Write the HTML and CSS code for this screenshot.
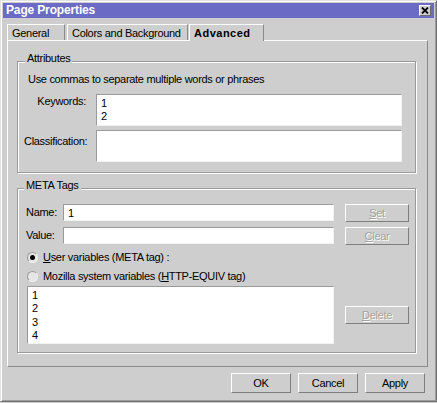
FILE: index.html
```html
<!DOCTYPE html>
<html>
<head>
<meta charset="utf-8">
<title>Page Properties</title>
<link rel="stylesheet" href="styles.css">
</head>
<body>
<div class="window">
  <div class="titlebar">
    <span class="title">Page Properties</span>
    <span class="close"><svg width="8" height="7" viewBox="0 0 8 7"><path d="M1 0.5 L7 6.5 M7 0.5 L1 6.5" stroke="#000" stroke-width="1.8"/></svg></span>
  </div>
  <div class="tabs">
    <div class="tab tab-general">General</div>
    <div class="tab tab-colors">Colors and Background</div>
    <div class="tab tab-advanced">Advanced</div>
  </div>
  <div class="panel">
    <fieldset class="group group-attrs">
      <legend class="legend">Attributes</legend>
      <div class="hint">Use commas to separate multiple words or phrases</div>
      <div class="field-row">
        <label class="field-label label-keywords">Keywords:</label>
        <textarea class="textbox textarea">1
2</textarea>
      </div>
      <div class="field-row">
        <label class="field-label label-classification">Classification:</label>
        <textarea class="textbox textarea"></textarea>
      </div>
    </fieldset>
    <fieldset class="group group-meta">
      <legend class="legend">META Tags</legend>
      <div class="meta-row">
        <label class="meta-label">Name:</label>
        <input class="textbox input" type="text" value="1">
        <button class="btn btn-side" disabled><u>S</u>et</button>
      </div>
      <div class="meta-row">
        <label class="meta-label">Value:</label>
        <input class="textbox input" type="text" value="">
        <button class="btn btn-side" disabled><u>C</u>lear</button>
      </div>
      <div class="radio-group">
        <div class="radio-row"><span class="radio is-checked"></span><span><u>U</u>ser variables (META tag) :</span></div>
        <div class="radio-row"><span class="radio"></span><span>Mozilla system variables (<u>H</u>TTP-EQUIV tag)</span></div>
      </div>
      <div class="list-row">
        <div class="listbox">
          <div>1</div>
          <div>2</div>
          <div>3</div>
          <div>4</div>
        </div>
        <button class="btn btn-side" disabled><u>D</u>elete</button>
      </div>
    </fieldset>
  </div>
  <div class="actions">
    <button class="btn btn-action">OK</button>
    <button class="btn btn-action">Cancel</button>
    <button class="btn btn-action">Apply</button>
  </div>
</div>
</body>
</html>
```
FILE: styles.css
```css
* { box-sizing: border-box; }
html, body { margin: 0; padding: 0; }
body {
  width: 437px;
  height: 403px;
  background: #cecece;
  font-family: "Liberation Sans", Arial, sans-serif;
  font-size: 11px;
  line-height: 13px;
  letter-spacing: -0.3px;
  color: #000;
  overflow: hidden;
}
.window {
  width: 437px;
  height: 402px;
  padding: 2px;
  border: 1px solid;
  border-color: #e2e2e2 #707070 #707070 #e2e2e2;
  box-shadow: inset 1px 1px #fff, inset -1px -1px #9c9c9c;
  background: #cecece;
  display: flex;
  flex-direction: column;
}
.titlebar {
  height: 15px;
  background: #6b6bc5;
  display: flex;
  align-items: flex-start;
  justify-content: space-between;
  padding: 0 3px 0 3px;
}
.title {
  color: #fff;
  font-weight: bold;
  font-size: 12px;
  line-height: 15px;
  letter-spacing: -0.15px;
}
.close {
  margin-top: 2px;
  width: 12px;
  height: 11px;
  background: #cecece;
  border: 1px solid;
  border-color: #fff #6a6a6a #6a6a6a #fff;
  display: flex;
  align-items: center;
  justify-content: center;
}
.close svg { display: block; }
.tabs {
  display: flex;
  align-items: flex-end;
  margin-top: 6px;
  margin-left: 4px;
  height: 16px;
  position: relative;
  z-index: 1;
}
.tab {
  height: 16px;
  padding: 2px 0 0 4px;
  border: 1px solid;
  border-bottom: none;
  border-color: #fff #8a8a8a transparent #fff;
  white-space: nowrap;
  background: #cecece;
}
.tab-general { width: 58px; }
.tab-colors { width: 121px; margin-left: 2px; }
.tab-advanced {
  width: 75px;
  margin-left: 1px;
  height: 17px;
  margin-bottom: -1px;
  font-weight: bold;
  letter-spacing: 0.5px;
}
.panel {
  margin-left: 4px;
  width: 421px;
  border: 1px solid;
  border-color: #fff #8a8a8a #8a8a8a #fff;
  padding: 11px 11px 13px 9px;
}
.group {
  margin: 0;
  min-width: 0;
  border: 1px solid #9a9a9a;
  box-shadow: inset 1px 1px #fff, 1px 1px #fff;
}
.group-attrs { padding: 2px 13px 10px 6px; }
.group-meta { margin-top: 6px; padding: 6px 6px 8px 8px; }
.legend {
  padding: 0 2px 6px;
  line-height: 13px;
  background: #cecece;
}
.group-attrs .legend { margin-left: 1px; }
.group-meta .legend { margin-left: -2px; }
.hint { margin-left: 4px; white-space: nowrap; }
.field-row { display: flex; margin-top: 8px; }
.field-row + .field-row { margin-top: 4px; }
.field-label {
  width: 62px;
  margin-right: 10px;
  text-align: right;
  white-space: nowrap;
}
.label-keywords { padding-top: 1px; }
.label-classification { padding-top: 5px; }
.textbox {
  font: inherit;
  letter-spacing: inherit;
  color: #000;
  background: #fff;
  border: 1px solid;
  border-color: #9a9a9a #f2f2f2 #f2f2f2 #9a9a9a;
  margin: 0;
  outline: none;
  resize: none;
  overflow: hidden;
}
.textarea {
  width: 306px;
  height: 32px;
  padding: 2px 4px 0;
  line-height: 13.33px;
}
.input {
  width: 271px;
  height: 17px;
  padding: 1px 4px;
  line-height: 13px;
}
.meta-row { display: flex; align-items: flex-start; }
.meta-row + .meta-row { margin-top: 5px; }
.meta-label { width: 37px; padding-top: 2px; white-space: nowrap; }
.btn {
  font: inherit;
  letter-spacing: inherit;
  color: #000;
  background: #cecece;
  border: 1px solid;
  border-color: #fff #7e7e7e #7e7e7e #fff;
  margin: 0;
  padding: 0;
}
.btn:disabled { color: #a2a2a2; text-shadow: 1px 1px 0 #fff; }
.btn-side { margin-left: 11px; width: 64px; height: 18px; flex: none; }
.radio-group {
  margin-top: 6px;
  margin-left: 1px;
  display: flex;
  flex-direction: column;
  gap: 6px;
}
.radio-row { display: flex; align-items: center; height: 13px; white-space: nowrap; }
.radio {
  width: 11px;
  height: 11px;
  margin-right: 5px;
  border-radius: 50%;
  border: 1px solid;
  border-color: #9a9a9a #f0f0f0 #f0f0f0 #9a9a9a;
  background: #e6e6e6;
  display: flex;
  align-items: center;
  justify-content: center;
}
.radio.is-checked::after {
  content: "";
  width: 5px;
  height: 5px;
  border-radius: 50%;
  background: #000;
}
.list-row { display: flex; align-items: center; margin-top: 3px; margin-left: 1px; }
.listbox {
  width: 307px;
  height: 58px;
  background: #fff;
  border: 1px solid;
  border-color: #9a9a9a #f2f2f2 #f2f2f2 #9a9a9a;
  padding: 2px 4px 0;
  line-height: 13.33px;
  flex: none;
}
.actions {
  display: flex;
  justify-content: flex-end;
  gap: 7px;
  margin-top: 6px;
  padding-right: 9px;
}
.btn-action { width: 60px; height: 20px; }
```
